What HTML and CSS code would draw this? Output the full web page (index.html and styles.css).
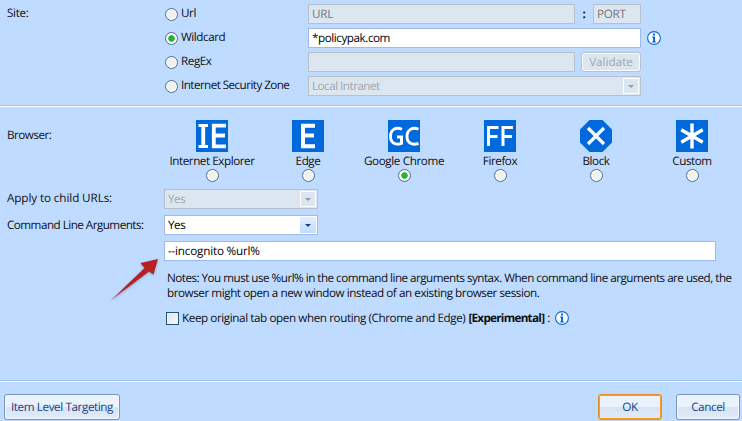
FILE: index.html
```html
<!DOCTYPE html>
<html lang="en">
<head>
<meta charset="utf-8">
<title>Route editor</title>
<link rel="stylesheet" href="styles.css">
</head>
<body>
<main class="dialog">
  <section class="site">
    <div class="label">Site:</div>
    <div class="rows">
      <div class="row"><label class="choice"><i class="radio"></i><span>Url</span></label>
        <div class="field disabled url">URL</div><b class="colon">:</b><div class="field disabled port">PORT</div></div>
      <div class="row"><label class="choice"><i class="radio on"></i><span>Wildcard</span></label>
        <div class="field wide"><span class="domain">*policypak.com</span></div>
        <svg class="info" viewBox="0 0 14 14"><circle cx="7" cy="7" r="6.4" fill="#fff" stroke="#0b6ad8" stroke-width="1.1"/><path d="M6 2.5h2v2H6zM5 5.5h3v5h1v1H5v-1h1v-4H5z" fill="#0867dc"/></svg></div>
      <div class="row"><label class="choice"><i class="radio"></i><span>RegEx</span></label>
        <div class="field disabled regex"></div><div class="validate">Validate</div></div>
      <div class="row"><label class="choice"><i class="radio"></i><span class="zone">Internet Security Zone</span></label>
        <div class="field disabled wide select"><span class="intranet">Local Intranet</span><i class="drop"></i></div></div>
    </div>
  </section>
  <section class="browser">
    <div class="label">Browser:</div>
    <div class="browsers">
      <div class="item"><svg class="logo" viewBox="0 0 32 32"><path fill="#0069dc" d="M0 0h32v32H0z"/><path d="M2.500 5.500h9.500M2.500 26.500h9.500" stroke="#fff" stroke-width="3"/><path d="M7.250 5v22M30 5.700H17.800v20.600H30M18 15.500h11" fill="none" stroke="#fff" stroke-width="3.800"/></svg><span class="ie">Internet Explorer</span><i class="radio"></i></div>
      <div class="item"><svg class="logo" viewBox="0 0 32 32"><path fill="#0069dc" d="M0 0h32v32H0z"/><path d="M23 5.700H11v20.600h12M11 15.500h11" fill="none" stroke="#fff" stroke-width="4"/></svg><span>Edge</span><i class="radio"></i></div>
      <div class="item"><svg class="logo" viewBox="0 0 32 32"><path fill="#0069dc" d="M0 0h32v32H0z"/><path d="M14 9.300C8 6.500 2.500 9.500 2.500 16.500c0 6.500 5 9 11 6.800V17H9M30.500 9.300c-6-2.700-11.500.5-11.500 7.200s5.500 9.200 11.500 6.800" fill="none" stroke="#fff" stroke-width="2.900"/></svg><span class="gc">Google Chrome</span><i class="radio on"></i></div>
      <div class="item"><svg class="logo" viewBox="0 0 32 32"><path fill="#0069dc" d="M0 0h32v32H0z"/><path d="M14.500 7.500H4.500V26M4.500 16.500H13.500M29 7.500H19V26M19 16.500h9" fill="none" stroke="#fff" stroke-width="3"/></svg><span>Firefox</span><i class="radio"></i></div>
      <div class="item"><svg class="logo" viewBox="0 0 32 32"><path fill="#0069dc" d="M9.500 0h13L32 9.500v13L22.500 32h-13L0 22.500v-13z"/><path d="M8 8l16 16M24 8L8 24" stroke="#fff" stroke-width="3.200"/></svg><span>Block</span><i class="radio"></i></div>
      <div class="item"><svg class="logo" viewBox="0 0 32 32"><path fill="#0069dc" d="M0 0h32v32H0z"/><path d="M16 3.500v25M5.200 9.800l21.600 12.400M26.800 9.800L5.200 22.200" stroke="#fff" stroke-width="3.400"/></svg><span>Custom</span><i class="radio"></i></div>
    </div>
  </section>
  <section class="options">
    <div class="option"><div class="label apply">Apply to child URLs:</div><div class="field disabled select short">Yes<i class="drop"></i></div></div>
    <div class="option"><div class="label args">Command Line Arguments:</div><div class="field select short">Yes<i class="drop"></i></div></div>
    <div class="field command"><span>--incognito %url%</span></div>
    <p class="notes"><span class="n1">Notes: You must use %url% in the command line arguments syntax. When command line arguments are used, the</span><br><span class="n2">browser might open a new window instead of an existing browser session.</span></p>
    <div class="keep"><i class="check"></i><span class="keeptext">Keep original tab open when routing (Chrome and Edge)</span><b>[Experimental]</b><span class="sep">:</span>
      <svg class="info" viewBox="0 0 14 14"><circle cx="7" cy="7" r="6.4" fill="#fff" stroke="#0b6ad8" stroke-width="1.1"/><path d="M6 2.500h2v2H6zM5 5.500h3v5h1v1H5v-1h1v-4H5z" fill="#0867dc"/></svg></div>
  </section>
  <footer><div class="button targeting">Item Level Targeting</div><div class="button ok">OK</div><div class="button">Cancel</div></footer>
  <svg class="arrow" viewBox="0 0 60 54"><defs><filter id="s" x="-20%" y="-20%" width="140%" height="140%"><feDropShadow dx="0" dy="1" stdDeviation="1" flood-color="#506080" flood-opacity=".5"/></filter><linearGradient id="r" x1="0" y1="1" x2="1" y2="0"><stop offset="0" stop-color="#c96565"/><stop offset=".35" stop-color="#b52025"/><stop offset="1" stop-color="#b52025"/></linearGradient></defs><path d="M5 46L39.500 13 35.500 8 53 4 48.500 19.500 44 16.500Z" fill="url(#r)" filter="url(#s)"/></svg>
</main>
</body>
</html>
```
FILE: styles.css
```css
* { box-sizing: border-box; }
body { margin: 0; background: #bfdbff; }
.dialog {
  position: relative;
  width: 742px;
  height: 421px;
  overflow: hidden;
  font: 11.700px/16px "Open Sans", "Noto Sans", sans-serif;
  letter-spacing: -.45px;
  text-rendering: geometricPrecision;
  color: #101010;
  white-space: nowrap;
  display: flex;
  flex-direction: column;
}
.site { height: 107px; display: flex; padding: 4px 0 0 7px; border-bottom: 1px solid #fff; box-shadow: inset 0 -1px #9ac3f8; flex: none; }
.label { width: 158px; flex: none; line-height: 20px; letter-spacing: -.32px; }
.site .label { line-height: 19px; }
.rows { display: flex; flex-direction: column; gap: 4px; }
.row { display: flex; height: 20px; align-items: center; }
.choice { width: 143px; display: flex; align-items: center; gap: 3px; line-height: 16px; }
.choice span { position: relative; top: -1px; }
.zone { letter-spacing: -.57px; }
.intranet { letter-spacing: -.52px; }
.radio { width: 13px; height: 13px; flex: none; border: 1px solid #456f9b; border-radius: 50%; background: #f1f1ef; box-shadow: inset 0 0 0 1px #fff; }
.radio.on { background: radial-gradient(circle, #25b42b 0 2.900px, #f1f1ef 3.500px); }
.field { height: 20px; border: 1px solid #9dbbea; background: #fff; padding: 0 3px; line-height: 18px; color: #000; flex: none; }
.field.disabled { background: #dce6f0; border-color: #b7c1cb; color: #a0a7af; }
.url.disabled, .port.disabled { color: #74777b; letter-spacing: -.3px; }
.url, .regex { width: 267px; }
.colon { width: 18px; text-align: center; }
.port { width: 48px; }
.wide { width: 333px; }
.info { width: 14px; height: 14px; margin-left: 6px; flex: none; overflow: visible; }
.validate { width: 60px; height: 20px; margin-left: 6px; border: 1px solid #b7c1cb; border-radius: 3px; box-shadow: inset 0 0 0 1px #fff; background: #dce6f0; color: #a0a7af; text-align: center; line-height: 18px; letter-spacing: 0; }
.select { display: flex; justify-content: space-between; padding-right: 1px; align-items: center; }
.drop { width: 16px; height: 16px; background: linear-gradient(#e3efff, #c2daff); display: grid; place-items: center; }
.drop::before { content: ""; border: 3px solid transparent; border-top: 3px solid #15428b; border-bottom: 0; }
.disabled .drop { background: #dce6f0; border: 1px solid #fff; }
.disabled .drop::before { border-top-color: #9299a0; }
.browser { height: 82px; display: flex; padding: 13px 0 0 7px; flex: none; }
.browser .label { width: 157px; padding-top: 5px; letter-spacing: -.5px; }
.browsers { display: grid; grid-template-columns: repeat(6, 96px); }
.item { display: flex; flex-direction: column; align-items: center; }
.item span { line-height: 16px; padding-top: 1px; }
.item .gc { letter-spacing: -.38px; }
.logo { width: 32px; height: 32px; }
.options { flex: none; height: 191px; padding-left: 7px; }
.option { display: flex; height: 20px; margin-bottom: 6px; }
.option .label { width: 157px; line-height: 19px; }
.option .apply { letter-spacing: -.1px; }
.option .args { letter-spacing: -.53px; line-height: 21px; }
.short { width: 154px; }
.command { width: 552px; margin-left: 157px; letter-spacing: -.2px; }
.notes { margin: 10px 0 0 160px; line-height: 15px; }
.n1 { letter-spacing: -.525px; }
.keep { display: flex; align-items: center; margin: 9px 0 0 159px; height: 16px; }
.check { width: 13px; height: 13px; border: 1px solid #1c5180; background: linear-gradient(135deg, #dfe3e8, #fafafa); box-shadow: inset 0 0 0 1px #f3f4f5; margin-right: 3px; }
.keeptext { letter-spacing: -.42px; }
.keep b { margin-left: 3px; letter-spacing: -.72px; }
.sep { margin-left: 3px; }
.keep .info { margin-left: 5px; }
footer { flex: none; display: flex; height: 41px; padding: 13px 2px 0 4px; border-top: 1px solid #9ac3f8; box-shadow: inset 0 1px #fff; }
.button { width: 64px; height: 26px; border: 1px solid #7695bd; border-radius: 3px; background: linear-gradient(#eaf2fd 0 50%, #d6e3f3 50%, #e1ecfa); box-shadow: inset 0 0 0 1px #f5f9ff; color: #15428b; line-height: 24px; text-align: center; letter-spacing: -.4px; }
.targeting { width: 116px; margin-right: auto; }
.ok { margin-right: 14px; border: 1px solid #e98f1d; box-shadow: inset 0 0 0 1px #ff9c1b; }
.arrow { position: absolute; left: 105px; top: 255px; width: 60px; height: 54px; }
```
